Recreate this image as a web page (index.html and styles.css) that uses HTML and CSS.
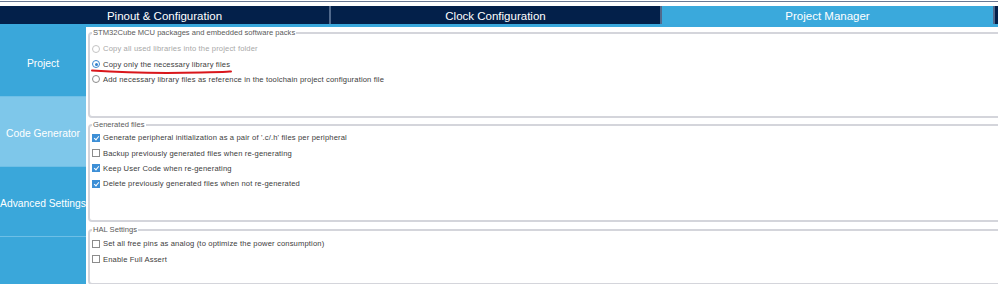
FILE: index.html
```html
<!DOCTYPE html>
<html lang="en">
<head>
    <meta charset="UTF-8">
    <title>Project Manager</title>
    <link rel="stylesheet" href="styles.css">
</head>
<body>
    <div class="top-strip"></div>
    <div class="tab-bar">
        <div class="tab">Pinout &amp; Configuration</div>
        <div class="tab">Clock Configuration</div>
        <div class="tab active">Project Manager</div>
        <div class="tab-end"></div>
    </div>

    <div class="main">
        <div class="sidebar">
            <div class="side-item">Project</div>
            <div class="side-item selected">Code Generator</div>
            <div class="side-item">Advanced Settings</div>
            <div class="side-rest"></div>
        </div>

        <div class="content">
            <fieldset class="panel panel-packs">
                <legend>STM32Cube MCU packages and embedded software packs</legend>
                <div class="row disabled"><span class="radio"></span>Copy all used libraries into the project folder</div>
                <div class="row"><span class="radio checked"></span>Copy only the necessary library files</div>
                <div class="row"><span class="radio"></span>Add necessary library files as reference in the toolchain project configuration file</div>
            </fieldset>

            <fieldset class="panel panel-files">
                <legend>Generated files</legend>
                <div class="row"><span class="check checked"></span>Generate peripheral initialization as a pair of '.c/.h' files per peripheral</div>
                <div class="row"><span class="check"></span>Backup previously generated files when re-generating</div>
                <div class="row"><span class="check checked"></span>Keep User Code when re-generating</div>
                <div class="row"><span class="check checked"></span>Delete previously generated files when not re-generated</div>
            </fieldset>

            <fieldset class="panel panel-hal">
                <legend>HAL Settings</legend>
                <div class="row"><span class="check"></span>Set all free pins as analog (to optimize the power consumption)</div>
                <div class="row"><span class="check"></span>Enable Full Assert</div>
            </fieldset>
        </div>
    </div>

    <!-- red hand-drawn underline -->
    <svg class="scribble" width="144" height="8" viewBox="0 0 144 8">
        <path d="M1 2.5 C 30 4.5, 70 5.5, 110 4.5 S 135 3.5, 140 3.5" fill="none" stroke="#d9161b" stroke-width="2" stroke-linecap="round"/>
    </svg>
</body>
</html>
```

FILE: styles.css
```css
* {
    margin: 0;
    padding: 0;
    box-sizing: border-box;
}
body {
    font-family: "Liberation Sans", Arial, sans-serif;
    background: white;
    width: 998px;
    height: 284px;
    overflow: hidden;
    position: relative;
}
.top-strip {
    margin-top: 1px;
    height: 5px;
    border-top: 1px solid #687893;
}
.tab-bar {
    display: flex;
    gap: 2px;
    height: 21px;
    background: #51698c;
    border-bottom: 3px solid #3aa8dc;
}
.tab {
    width: 329px;
    background: #03204a;
    color: white;
    font-size: 11.5px;
    display: flex;
    align-items: center;
    justify-content: center;
    padding-top: 1px;
}
.tab.active {
    background: #3aa9dc;
    width: 331px;
}
.tab-end {
    flex: 1;
    background: #03204a;
}
.main {
    display: flex;
    gap: 2px;
    height: 257px;
}
.sidebar {
    width: 86px;
    display: flex;
    flex-direction: column;
    background: #3aa7da;
}
.side-item {
    height: 70px;
    display: flex;
    align-items: center;
    justify-content: center;
    padding-top: 3px;
    color: white;
    font-size: 10.3px;
    border-bottom: 1px solid #6ebfe6;
    white-space: nowrap;
}
.side-item.selected {
    background: #7ec7ea;
}
.side-rest {
    flex: 1;
}
.content {
    flex: 1;
    padding-top: 1px;
    overflow: hidden;
}
.panel {
    border: 2px solid #d4d5db;
    border-radius: 4px;
    margin-right: -20px;
    padding: 3px 0 0 2px;
    font-size: 7.6px;
    color: #3c3c3c;
}
.panel legend {
    color: #5a5a5a;
    padding: 0 1px;
    margin-left: 0;
    line-height: 10px;
}
.panel-packs {
    height: 90px;
}
.panel-files {
    margin-top: 2px;
    height: 102px;
    padding-top: 0;
}
.panel-hal {
    margin-top: 3px;
    height: 60px;
    padding-top: 1px;
}
.row {
    display: flex;
    align-items: center;
    height: 15.4px;
    gap: 3px;
    white-space: nowrap;
    letter-spacing: 0.15px;
}
.row.disabled {
    color: #a8a8a8;
}
.radio {
    width: 8px;
    height: 8px;
    border-radius: 50%;
    border: 1px solid #8a8a8a;
    background: white;
    position: relative;
}
.row.disabled .radio {
    border-color: #c4c4c4;
}
.radio.checked {
    border-color: #3b88d0;
}
.radio.checked::after {
    content: "";
    position: absolute;
    left: 1.5px;
    top: 1.5px;
    width: 3px;
    height: 3px;
    border-radius: 50%;
    background: #2f7fcc;
}
.check {
    width: 8px;
    height: 8px;
    border: 1px solid #8c8c8c;
    background: white;
    position: relative;
}
.check.checked {
    background: #3d8fd6;
    border-color: #3d8fd6;
}
.check.checked::after {
    content: "";
    position: absolute;
    left: 2px;
    top: 0px;
    width: 2px;
    height: 4px;
    border-right: 1px solid white;
    border-bottom: 1px solid white;
    transform: rotate(40deg);
}
.scribble {
    position: absolute;
    left: 91px;
    top: 68px;
}
```
